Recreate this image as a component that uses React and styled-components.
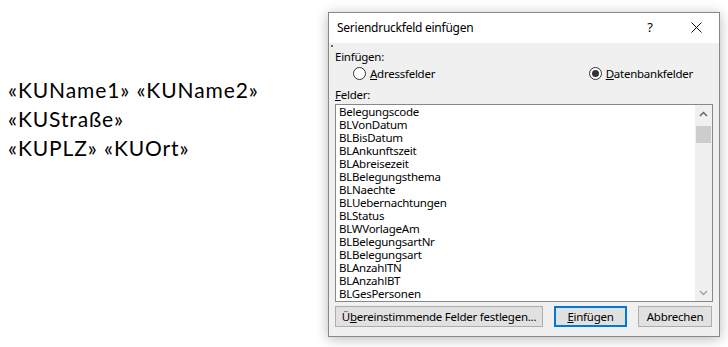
import styled, { createGlobalStyle } from "styled-components";

const GlobalStyle = createGlobalStyle`
  html, body {
    margin: 0;
    padding: 0;
    background: #ffffff;
  }
`;

const Page = styled.div`
  display: flex;
  align-items: flex-start;
  width: 728px;
  height: 347px;
  overflow: hidden;
`;

const Doc = styled.div`
  width: 328px;
  padding: 75px 0 0 8px;
  box-sizing: border-box;
  font-family: Lato, "Open Sans", sans-serif;
  font-size: 21px;
  letter-spacing: 0.9px;
  line-height: 29px;
  color: #000;
`;

const Dialog = styled.div`
  margin-top: 12px;
  width: 392px;
  height: 325px;
  box-sizing: border-box;
  border: 1px solid #888888;
  background: #f0f0f0;
  box-shadow: 0 2px 12px rgba(0, 0, 0, 0.28);
  display: flex;
  flex-direction: column;
  font-family: "Noto Sans", sans-serif;
  font-size: 11.5px;
  letter-spacing: -0.25px;
  color: #000;
`;

const TitleBar = styled.div`
  height: 30px;
  background: #ffffff;
  display: flex;
  align-items: center;
  padding-left: 8px;
  font-size: 12px;
  padding-bottom: 2px;
  box-sizing: border-box;
`;

const Title = styled.span`
  flex: 1;
`;

const TitleButton = styled.div`
  width: 46px;
  height: 28px;
  display: flex;
  align-items: center;
  justify-content: center;
  font-size: 13px;
`;

const Body = styled.div`
  flex: 1;
  position: relative;
  padding: 6px 6px 0 6px;
  display: flex;
  flex-direction: column;
`;

const FocusDot = styled.span`
  position: absolute;
  left: 2px;
  top: 2px;
  width: 2px;
  height: 2px;
  background: #666;
`;

const Label = styled.div`
  line-height: 16px;
`;

const RadioRow = styled.div`
  display: flex;
  justify-content: space-between;
  padding: 0 20px 0 18px;
  height: 16px;
  align-items: center;
`;

const Radio = styled.label`
  display: flex;
  align-items: center;
  gap: 4px;
`;

const Circle = styled.span`
  width: 11px;
  height: 11px;
  border-radius: 50%;
  border: 1px solid #333;
  background: #fff;
  display: flex;
  align-items: center;
  justify-content: center;
  &::after {
    content: "";
    width: ${(p) => (p.checked ? "7px" : "0")};
    height: ${(p) => (p.checked ? "7px" : "0")};
    border-radius: 50%;
    background: #333;
  }
`;

const FieldsLabel = styled(Label)`
  margin-top: 6px;
`;

const ListBox = styled.div`
  margin-top: 1px;
  height: 198px;
  border: 1px solid #828790;
  background: #fff;
  display: flex;
  box-sizing: border-box;
`;

const Items = styled.div`
  flex: 1;
  padding: 0 3px;
  overflow: hidden;
`;

const Item = styled.div`
  height: 13px;
  line-height: 13px;
  white-space: nowrap;
`;

const ScrollBar = styled.div`
  width: 17px;
  background: #f0f0f0;
  display: flex;
  flex-direction: column;
  align-items: center;
`;

const Arrow = styled.div`
  height: 17px;
  width: 17px;
  display: flex;
  align-items: center;
  justify-content: center;
`;

const Thumb = styled.div`
  margin-top: 4px;
  width: 15px;
  height: 17px;
  background: #cdcdcd;
`;

const Spacer = styled.div`
  flex: 1;
`;

const ButtonRow = styled.div`
  display: flex;
  gap: 11px;
  margin-top: 4px;
`;

const Button = styled.div`
  height: 21px;
  box-sizing: border-box;
  width: ${(p) => p.w}px;
  background: #e1e1e1;
  border: ${(p) => (p.primary ? "2px solid #0078d7" : "1px solid #adadad")};
  display: flex;
  align-items: center;
  justify-content: center;
  white-space: nowrap;
`;

const fields = [
  "Belegungscode",
  "BLVonDatum",
  "BLBisDatum",
  "BLAnkunftszeit",
  "BLAbreisezeit",
  "BLBelegungsthema",
  "BLNaechte",
  "BLUebernachtungen",
  "BLStatus",
  "BLWVorlageAm",
  "BLBelegungsartNr",
  "BLBelegungsart",
  "BLAnzahlTN",
  "BLAnzahlBT",
  "BLGesPersonen",
];

function Chevron({ up }) {
  return (
    <svg width="9" height="6" viewBox="0 0 9 6">
      <path
        d={up ? "M1 5 L4.5 1.5 L8 5" : "M1 1 L4.5 4.5 L8 1"}
        fill="none"
        stroke={up ? "#606060" : "#a0a0a0"}
        strokeWidth="1.4"
      />
    </svg>
  );
}

export default function App() {
  return (
    <>
      <GlobalStyle />
      <Page>
        <Doc>
          <div>«KUName1» «KUName2»</div>
          <div>«KUStraße»</div>
          <div>«KUPLZ» «KUOrt»</div>
        </Doc>
        <Dialog>
          <TitleBar>
            <Title>Seriendruckfeld einfügen</Title>
            <TitleButton>?</TitleButton>
            <TitleButton>
              <svg width="11" height="11" viewBox="0 0 11 11">
                <path d="M0.5 0.5 L10.5 10.5 M10.5 0.5 L0.5 10.5" stroke="#111" strokeWidth="1" />
              </svg>
            </TitleButton>
          </TitleBar>
          <Body>
            <FocusDot />
            <Label>Einfügen:</Label>
            <RadioRow>
              <Radio>
                <Circle />
                <span><u>A</u>dressfelder</span>
              </Radio>
              <Radio>
                <Circle checked />
                <span><u>D</u>atenbankfelder</span>
              </Radio>
            </RadioRow>
            <FieldsLabel><u>F</u>elder:</FieldsLabel>
            <ListBox>
              <Items>
                {fields.map((f) => (
                  <Item key={f}>{f}</Item>
                ))}
              </Items>
              <ScrollBar>
                <Arrow><Chevron up /></Arrow>
                <Thumb />
                <Spacer />
                <Arrow><Chevron /></Arrow>
              </ScrollBar>
            </ListBox>
            <ButtonRow>
              <Button w={208}>Ü<u>b</u>ereinstimmende Felder festlegen...</Button>
              <Button w={73} primary><u>E</u>infügen</Button>
              <Button w={74}>Abbrechen</Button>
            </ButtonRow>
          </Body>
        </Dialog>
      </Page>
    </>
  );
}
